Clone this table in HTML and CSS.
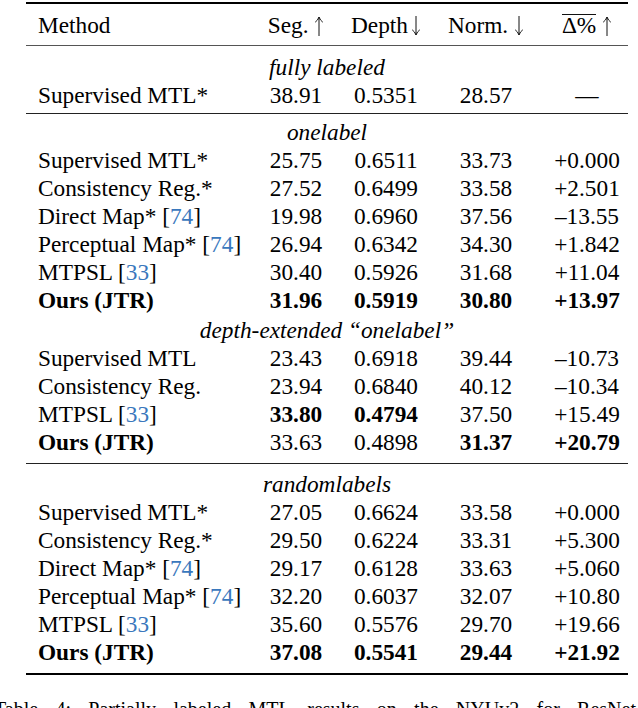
FILE: index.html
```html
<!DOCTYPE html>
<html>
<head>
<meta charset="utf-8">
<link rel="stylesheet" href="styles.css">
</head>
<body>
<div class="table-wrap">
<table class="results">
  <colgroup>
    <col class="c-method"><col class="c-seg"><col class="c-depth"><col class="c-norm"><col class="c-delta">
  </colgroup>
  <thead>
    <tr>
      <th class="method">Method</th>
      <th>Seg. <svg class="arr" viewBox="0 0 10 20" aria-label="↑"><path d="M5 20V1.2M1.2 6.2Q3.8 4.4 5 1Q6.2 4.4 8.8 6.2"/></svg></th>
      <th>Depth<svg class="arr tight" viewBox="0 0 10 20" aria-label="↓"><path d="M5 0V18.8M1.2 13.8Q3.8 15.6 5 19Q6.2 15.6 8.8 13.8"/></svg></th>
      <th>Norm. <svg class="arr" viewBox="0 0 10 20" aria-label="↓"><path d="M5 0V18.8M1.2 13.8Q3.8 15.6 5 19Q6.2 15.6 8.8 13.8"/></svg></th>
      <th><span class="bar">Δ%</span> <svg class="arr" viewBox="0 0 10 20" aria-label="↑"><path d="M5 20V1.2M1.2 6.2Q3.8 4.4 5 1Q6.2 4.4 8.8 6.2"/></svg></th>
    </tr>
  </thead>
  <tbody class="group g1">
    <tr class="title"><td colspan="5">fully labeled</td></tr>
    <tr class="last"><td class="method">Supervised MTL*</td><td>38.91</td><td>0.5351</td><td>28.57</td><td>—</td></tr>
  </tbody>
  <tbody class="group g2">
    <tr class="title"><td colspan="5">onelabel</td></tr>
    <tr><td class="method">Supervised MTL*</td><td>25.75</td><td>0.6511</td><td>33.73</td><td>+0.000</td></tr>
    <tr><td class="method">Consistency Reg.*</td><td>27.52</td><td>0.6499</td><td>33.58</td><td>+2.501</td></tr>
    <tr><td class="method">Direct Map* [<span class="cite">74</span>]</td><td>19.98</td><td>0.6960</td><td>37.56</td><td>–13.55</td></tr>
    <tr><td class="method">Perceptual Map* [<span class="cite">74</span>]</td><td>26.94</td><td>0.6342</td><td>34.30</td><td>+1.842</td></tr>
    <tr><td class="method">MTPSL [<span class="cite">33</span>]</td><td>30.40</td><td>0.5926</td><td>31.68</td><td>+11.04</td></tr>
    <tr class="ours"><td class="method">Ours (JTR)</td><td>31.96</td><td>0.5919</td><td>30.80</td><td>+13.97</td></tr>
    <tr class="title sub"><td colspan="5">depth-extended “onelabel”</td></tr>
    <tr><td class="method">Supervised MTL</td><td>23.43</td><td>0.6918</td><td>39.44</td><td>–10.73</td></tr>
    <tr><td class="method">Consistency Reg.</td><td>23.94</td><td>0.6840</td><td>40.12</td><td>–10.34</td></tr>
    <tr><td class="method">MTPSL [<span class="cite">33</span>]</td><td class="b">33.80</td><td class="b">0.4794</td><td>37.50</td><td>+15.49</td></tr>
    <tr class="last"><td class="method b">Ours (JTR)</td><td>33.63</td><td>0.4898</td><td class="b">31.37</td><td class="b">+20.79</td></tr>
  </tbody>
  <tbody class="group g3">
    <tr class="title"><td colspan="5">randomlabels</td></tr>
    <tr><td class="method">Supervised MTL*</td><td>27.05</td><td>0.6624</td><td>33.58</td><td>+0.000</td></tr>
    <tr><td class="method">Consistency Reg.*</td><td>29.50</td><td>0.6224</td><td>33.31</td><td>+5.300</td></tr>
    <tr><td class="method">Direct Map* [<span class="cite">74</span>]</td><td>29.17</td><td>0.6128</td><td>33.63</td><td>+5.060</td></tr>
    <tr><td class="method">Perceptual Map* [<span class="cite">74</span>]</td><td>32.20</td><td>0.6037</td><td>32.07</td><td>+10.80</td></tr>
    <tr><td class="method">MTPSL [<span class="cite">33</span>]</td><td>35.60</td><td>0.5576</td><td>29.70</td><td>+19.66</td></tr>
    <tr class="ours last"><td class="method">Ours (JTR)</td><td>37.08</td><td>0.5541</td><td>29.44</td><td>+21.92</td></tr>
  </tbody>
</table>
</div>
<p class="caption">Table 4: Partially labeled MTL results on the NYUv2 for ResNet</p>
</body>
</html>
```

FILE: styles.css
```css
html, body {
  margin: 0;
  padding: 0;
  background: #fff;
}

body {
  font-family: "Liberation Serif", "Times New Roman", serif;
  font-size: 23.3px;
  color: #000;
  overflow: hidden;
  width: 638px;
  height: 708px;
}

.table-wrap {
  margin: 2px 0 0 26px;
  width: 602px;
  border-top: 2px solid #000;
  border-bottom: 2px solid #000;
}

.results {
  width: 602px;
  table-layout: fixed;
  border-collapse: separate;
  border-spacing: 0;
}

.c-method { width: 220px; }
.c-seg { width: 100px; }
.c-depth { width: 80px; }
.c-norm { width: 120px; }
.c-delta { width: 82px; }

.results th,
.results td {
  padding: 0;
  line-height: 28px;
  text-align: center;
  white-space: nowrap;
  font-weight: normal;
}

.results .method {
  text-align: left;
  padding-left: 12px;
}

.results thead th {
  border-bottom: 1px solid #555;
  padding-top: 7px;
  padding-bottom: 6px;
}

.arr {
  width: 10px;
  height: 20px;
  vertical-align: -3px;
  fill: none;
  stroke: #111;
  stroke-width: 1;
}

.arr.tight {
  margin-left: 3px;
}

.bar {
  display: inline-block;
  border-top: 1px solid #111;
  line-height: 20px;
}

.results .title td {
  font-style: italic;
}

.results .g1 .title td { padding-top: 7px; }
.results .g1 .last td { padding-bottom: 4px; border-bottom: 1px solid #222; }

.results .g2 .title td { padding-top: 4px; }
.results .g2 .title.sub td { padding-top: 2px; }
.results .g2 .last td { padding-bottom: 7px; border-bottom: 1px solid #222; }

.results .g3 .title td { padding-top: 6px; }
.results .g3 .last td { padding-bottom: 7px; }

.results .ours td,
.results .b {
  font-weight: bold;
}

.cite {
  color: #3a78bd;
}

.caption {
  width: 642px;
  margin: 20px 0 0 -6px;
  font-size: 20px;
  line-height: 28px;
  text-align: justify;
  text-align-last: justify;
}
```
